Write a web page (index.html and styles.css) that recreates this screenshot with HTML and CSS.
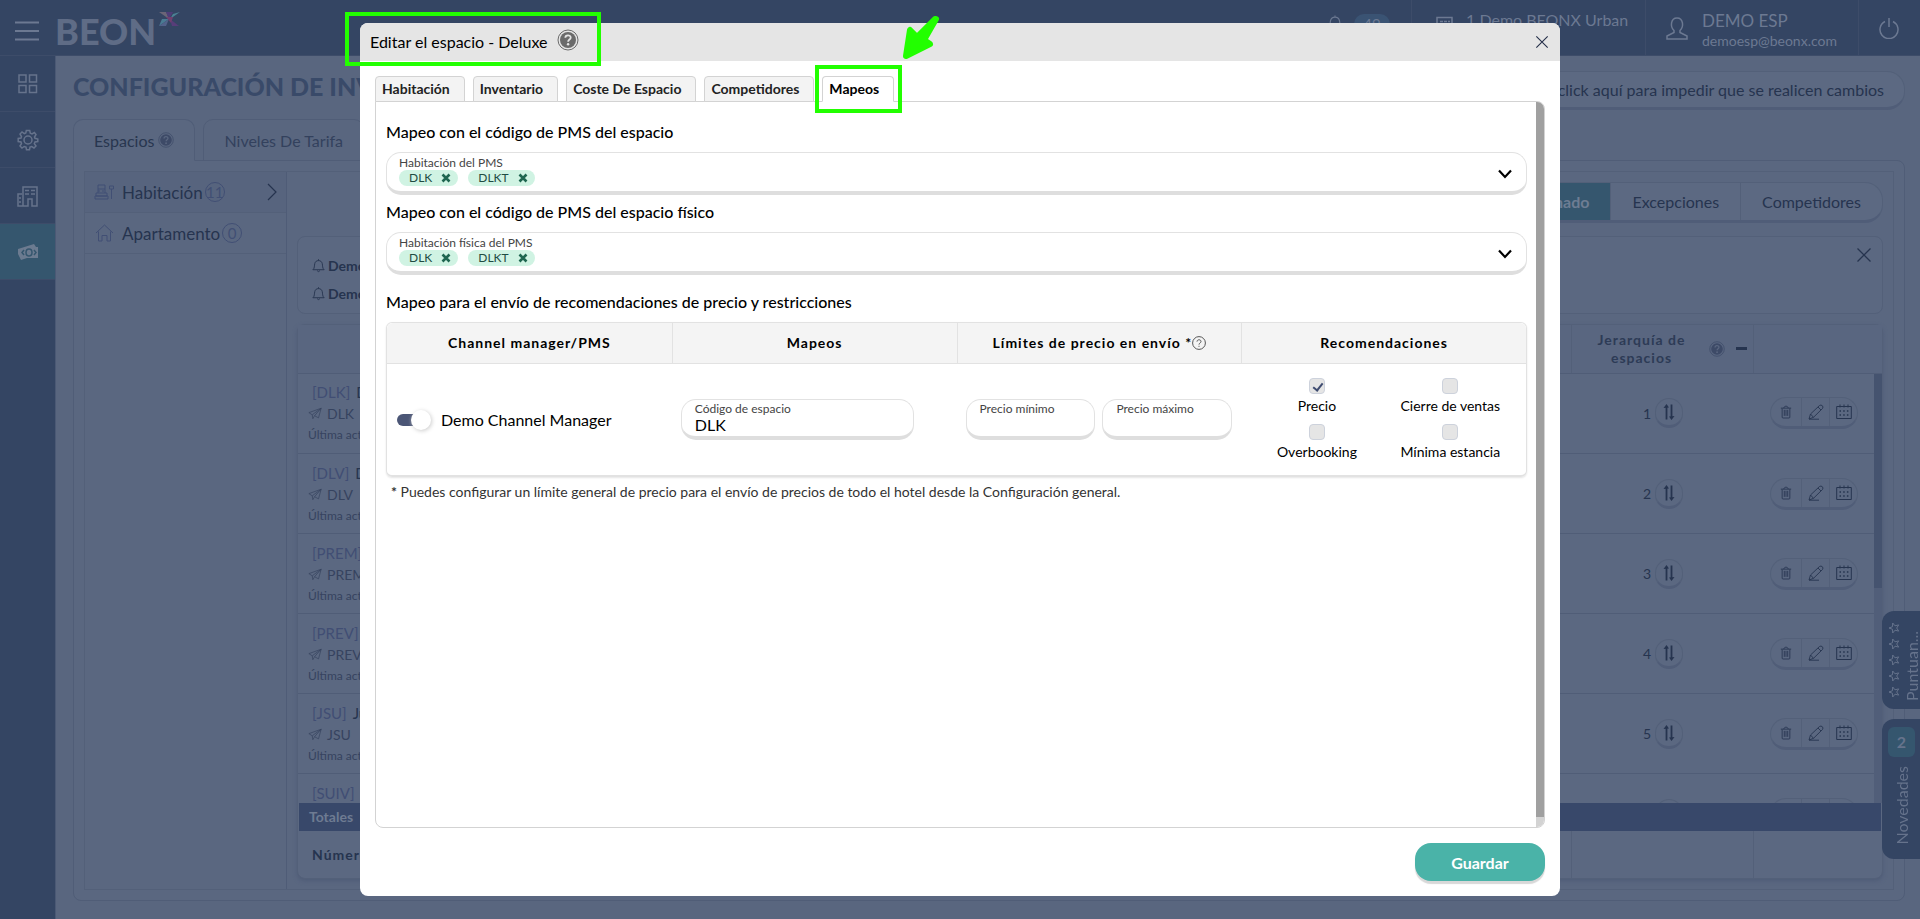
FILE: index.html
```html
<!DOCTYPE html>
<html lang="es">
<head>
<meta charset="utf-8">
<title>Configuración de inventario</title>
<link rel="stylesheet" href="styles.css">
</head>
<body>
<svg class="defs" aria-hidden="true">
  <symbol id="i-help" viewBox="0 0 22 22"><circle cx="11" cy="11" r="10" fill="none" stroke="currentColor" stroke-width="1"/><circle cx="11" cy="11" r="8" fill="currentColor"/><path d="M8.300 8.800C8.300 5.500 13.700 5.500 13.700 8.700C13.700 10.600 11.100 10.600 11.100 12.800" fill="none" stroke="var(--mark)" stroke-width="1.800"/><circle cx="11.100" cy="15.300" r="1.200" fill="var(--mark)"/></symbol>
  <symbol id="i-bell" viewBox="0 0 16 16"><path d="M2 12.500C4 11 3.500 8 4 6C4.600 3.600 6 2.800 8 2.800S11.400 3.600 12 6C12.500 8 12 11 14 12.500ZM8 2.800V1.300M6.500 13.500Q8 15.500 9.500 13.500" fill="none" stroke="currentColor"/></symbol>
  <symbol id="i-plane" viewBox="0 0 16 14"><path d="M1 6L15 1L12 12L7.500 9.500L5.500 13L4.800 8.500ZM4.800 8.500L15 1L7.500 9.500" fill="none" stroke="currentColor" stroke-width=".8"/></symbol>
  <symbol id="i-sort" viewBox="0 0 12 16"><path d="M3.500 15.500V2M8.500 .5V14" fill="none" stroke="currentColor" stroke-width="1.800"/><path d="M.5 4L3.500 0L6 3.500ZM6 12.500L8.500 16L11.500 12Z" fill="currentColor"/></symbol>
  <symbol id="i-trash" viewBox="0 0 14 16"><path d="M1 3.500H13M4.500 3.500C4.500 .5 9.500 .5 9.500 3.500M2.500 4V14Q2.500 15 3.500 15H10.500Q11.500 15 11.500 14V4M5 5.500V12.500M7 5.500V12.500M9 5.500V12.500" fill="none" stroke="currentColor"/></symbol>
  <symbol id="i-pen" viewBox="0 0 16 16"><path d="M1 15L2.500 10L11.500 1.500Q13 .5 14.300 1.700T14.500 4.500L5.500 13.300ZM10 3L13 6M2.500 10L5.500 13.300M1 15.200H11" fill="none" stroke="currentColor" stroke-width=".9"/></symbol>
  <symbol id="i-cal" viewBox="0 0 16 16"><path d="M.7 2.500H15.300V14.500H.7ZM4 .5V3.500M8 .5V3.500M12 .5V3.500" fill="none" stroke="currentColor"/><path d="M3.500 7H12.500M3.500 11H12.500" fill="none" stroke="currentColor" stroke-width="1.500" stroke-dasharray="1.500 2.200"/></symbol>
  <symbol id="i-x" viewBox="0 0 16 16"><path d="M1.500 1.500L14.500 14.500M14.500 1.500L1.500 14.500" fill="none" stroke="currentColor" stroke-width="1.300"/></symbol>
  <symbol id="i-cross" viewBox="0 0 10 10"><path d="M1.500 1.500L8.500 8.500M8.500 1.500L1.500 8.500" fill="none" stroke="currentColor" stroke-width="2.600"/></symbol>
  <symbol id="i-down" viewBox="0 0 14 10"><path d="M1 1.500L7 8L13 1.500" fill="none" stroke="currentColor" stroke-width="2.200"/></symbol>
  <symbol id="i-star" viewBox="0 0 12 12"><path d="M6 1L7.300 4.500L11 4.700L8.200 7L9.100 10.700L6 8.700L2.900 10.700L3.800 7L1 4.700L4.700 4.500Z" fill="none" stroke="currentColor"/></symbol>
</svg>

<div class="app">
  <header class="topbar">
    <button class="menu-btn" aria-label="Menú"><svg width="24" height="20" viewBox="0 0 24 20"><path d="M0 1.500H24M0 10H24M0 18.500H24" stroke="currentColor" stroke-width="2"/></svg></button>
    <div class="brand"><span>BEON</span><svg width="21" height="14" viewBox="0 0 21 14"><path d="M0 0H7L10 7Z" fill="#6b6577"/><path d="M7 0H14L10 7Z" fill="#4f3d79"/><path d="M14 2L21 0L11 7Z" fill="#4b8294"/><path d="M10 7L0 14L3 7Z" fill="#4a7b93"/><path d="M10 7L7 14H0Z" fill="#52628a"/><path d="M11 7L20 14H13Z" fill="#573d79"/><path d="M7 5L14 5L12 11Z" fill="#71406f"/></svg></div>
    <div class="top-cell bell"><svg width="18" height="18"><use href="#i-bell"/></svg><span class="count">49</span></div>
    <div class="top-cell hotel"><svg width="17" height="17" viewBox="0 0 17 17"><path d="M1 1.500H16V16H1ZM4 5.500H7M8 5.500H11M12 5.500H14" fill="none" stroke="currentColor" stroke-width="1.500"/></svg><span>1 Demo BEONX Urban</span></div>
    <div class="top-cell user"><svg width="22" height="23" viewBox="0 0 22 23"><path d="M1 22V19L8 15.500V13.500C4 10 4.500 1 11 1S18 10 14 13.500V15.500L21 19V22Z" fill="none" stroke="currentColor" stroke-width="1.500"/></svg><div><strong>DEMO ESP</strong><small>demoesp@beonx.com</small></div></div>
    <button class="top-cell power" aria-label="Salir"><svg width="20" height="22" viewBox="0 0 20 22"><path d="M6 4.500A9 9 0 1 0 14 4.500M10 1V10" fill="none" stroke="currentColor" stroke-width="1.500"/></svg></button>
  </header>

  <div class="body">
    <nav class="rail">
      <a href="#" aria-label="Panel"><svg width="20" height="20" viewBox="0 0 20 20"><path d="M1 1H8V8H1ZM11.500 1H18.500V8H11.500ZM1 11.500H8V18.500H1ZM11.500 11.500H18.500V18.500H11.500Z" fill="none" stroke="currentColor" stroke-width="1.500"/></svg></a>
      <a href="#" aria-label="Ajustes"><svg width="22" height="22" viewBox="0 0 22 22"><circle cx="11" cy="11" r="4" fill="none" stroke="currentColor" stroke-width="1.500"/><path d="M9.300 1.500H12.700L13.300 4.200L15 5L17.400 3.500L19 5.500L17.500 8L18 9.300L20.800 10V12.500L18 13L17.300 14.700L19 17L17 19L14.700 17.500L13 18L12.500 20.800H9.500L9 18L7.200 17.500L5 19L3 17L4.500 14.700L4 13L1.200 12.500V9.500L4 9L4.500 7.500L3 5L5 3L7.300 4.700L8.800 4Z" fill="none" stroke="currentColor" stroke-width="1.500"/></svg></a>
      <a href="#" aria-label="Hotel"><svg width="22" height="22" viewBox="0 0 22 22"><path d="M6 21H1V9H5M6 21V2H20V21H15V14H11V21ZM8 5.500H12M14 5.500H18M8 9H12M14 9H18M2 13H4M2 17H4" fill="none" stroke="currentColor" stroke-width="1.500"/></svg></a>
      <a href="#" class="active" aria-label="Tarifas"><svg width="22" height="18" viewBox="0 0 22 18"><path d="M1 6L17 1L19 4H21V15H10L4 17L1 11Z" fill="currentColor"/><ellipse cx="12" cy="9.500" rx="3" ry="3.500" fill="none" stroke="#35566e" stroke-width="1.500"/><path d="M7 7L5 9.500L7 12M17 7L19 9.500L17 12" fill="none" stroke="#35566e" stroke-width="1.500"/></svg></a>
    </nav>

    <main class="main">
      <div class="title-row">
        <h1>CONFIGURACIÓN DE INVENTARIO</h1>
        <button class="lock-btn">Haz click aquí para impedir que se realicen cambios</button>
      </div>
      <div class="page-tabs">
        <button class="page-tab on">Espacios <svg class="help" width="16" height="16"><use href="#i-help"/></svg></button>
        <button class="page-tab">Niveles De Tarifa</button>
      </div>
      <section class="page-panel">
        <div class="split">
          <aside class="types">
            <button class="type on"><svg width="20" height="16" viewBox="0 0 20 16"><path d="M4 1H11V5H4ZM4 5V9M11 5V9M2 9H13V12H2ZM1 12H14V15H1ZM17.500 5V15M15.500 2H19.500V5H15.500ZM4 7H6M8 7H10" fill="none" stroke="currentColor"/></svg><span>Habitación</span><i>11</i><svg class="go" width="10" height="18" viewBox="0 0 10 18"><path d="M1 1L9 9L1 17" fill="none" stroke="currentColor" stroke-width="1.200"/></svg></button>
            <button class="type"><svg width="20" height="18" viewBox="0 0 20 18"><path d="M2 9L10.500 1L19 9M4.500 7.500V17H8V11.500H13V17H16.500V7.500" fill="none" stroke="currentColor"/></svg><span>Apartamento</span><i>0</i></button>
          </aside>
          <div class="work">
            <div class="segments"><button class="seg on">Seleccionado</button><button class="seg">Excepciones</button><button class="seg">Competidores</button></div>
            <div class="notice">
              <ul><li><svg width="15" height="15"><use href="#i-bell"/></svg>Demo</li><li><svg width="15" height="15"><use href="#i-bell"/></svg>Demo</li></ul>
              <button class="plain" aria-label="Cerrar aviso"><svg width="16" height="16"><use href="#i-x"/></svg></button>
            </div>
            <div class="grid-card">
              <table class="grid">
                <thead><tr><th></th><th class="c-rank"><div class="rank-head"><span>Jerarquía de espacios</span><svg class="help" width="16" height="16"><use href="#i-help"/></svg><b class="minus"></b></div></th><th class="c-act"></th></tr></thead>
              </table>
              <div class="rows">
                <table class="grid"><tbody id="rooms"></tbody></table>
                <div class="track"><div class="thumb"></div></div>
              </div>
              <div class="totals">Totales</div>
              <table class="grid foot"><tbody><tr><td>Número</td><td class="c-rank"></td><td class="c-act"></td></tr></tbody></table>
            </div>
          </div>
        </div>
      </section>
    </main>
  </div>
</div>

<div class="side-tabs">
  <button class="side-tab rate"><span class="stars"><svg width="12" height="12"><use href="#i-star"/></svg><svg width="12" height="12"><use href="#i-star"/></svg><svg width="12" height="12"><use href="#i-star"/></svg><svg width="12" height="12"><use href="#i-star"/></svg><svg width="12" height="12"><use href="#i-star"/></svg></span><span class="vert">Puntuan...</span></button>
  <button class="side-tab news"><span class="num">2</span><span class="vert">Novedades</span></button>
</div>

<div class="overlay">
  <div class="modal" role="dialog" aria-labelledby="dlg-title">
    <div class="modal-head">
      <h2 id="dlg-title">Editar el espacio - Deluxe</h2>
      <svg class="help" width="22" height="22"><use href="#i-help"/></svg>
      <button class="plain close" aria-label="Cerrar"><svg width="14" height="14"><use href="#i-x"/></svg></button>
    </div>
    <div class="modal-body">
      <div class="tabs" role="tablist">
        <button role="tab" class="tab">Habitación</button>
        <button role="tab" class="tab">Inventario</button>
        <button role="tab" class="tab">Coste De Espacio</button>
        <button role="tab" class="tab">Competidores</button>
        <button role="tab" class="tab on" aria-selected="true">Mapeos</button>
      </div>
      <div class="panel">
        <div class="panel-content">
          <h3>Mapeo con el código de PMS del espacio</h3>
          <div class="multi">
            <div><label>Habitación del PMS</label><div class="chips"><span class="chip">DLK<button aria-label="Quitar DLK"><svg width="10" height="10"><use href="#i-cross"/></svg></button></span><span class="chip">DLKT<button aria-label="Quitar DLKT"><svg width="10" height="10"><use href="#i-cross"/></svg></button></span></div></div>
            <button class="plain" aria-label="Abrir lista"><svg width="14" height="10"><use href="#i-down"/></svg></button>
          </div>
          <h3>Mapeo con el código de PMS del espacio físico</h3>
          <div class="multi">
            <div><label>Habitación física del PMS</label><div class="chips"><span class="chip">DLK<button aria-label="Quitar DLK"><svg width="10" height="10"><use href="#i-cross"/></svg></button></span><span class="chip">DLKT<button aria-label="Quitar DLKT"><svg width="10" height="10"><use href="#i-cross"/></svg></button></span></div></div>
            <button class="plain" aria-label="Abrir lista"><svg width="14" height="10"><use href="#i-down"/></svg></button>
          </div>
          <h3 class="spaced">Mapeo para el envío de recomendaciones de precio y restricciones</h3>
          <table class="map">
            <thead><tr><th>Channel manager/PMS</th><th>Mapeos</th><th>Límites de precio en envío *<svg width="14" height="14" viewBox="0 0 14 14"><circle cx="7" cy="7" r="6.400" fill="none" stroke="#555"/><path d="M5 5.600C5 3.200 9 3.200 9 5.500C9 7 7 7 7 8.600M7 9.800V10.800" fill="none" stroke="#555"/></svg></th><th>Recomendaciones</th></tr></thead>
            <tbody><tr>
              <td><label class="switch-row"><input type="checkbox" class="switch" checked><span>Demo Channel Manager</span></label></td>
              <td><div class="field code"><label for="code">Código de espacio</label><input id="code" type="text" value="DLK"></div></td>
              <td><div class="pair"><div class="field"><label for="pmin">Precio mínimo</label><input id="pmin" type="text"></div><div class="field"><label for="pmax">Precio máximo</label><input id="pmax" type="text"></div></div></td>
              <td><div class="checks">
                <label><input type="checkbox" checked>Precio</label>
                <label><input type="checkbox">Cierre de ventas</label>
                <label><input type="checkbox">Overbooking</label>
                <label><input type="checkbox">Mínima estancia</label>
              </div></td>
            </tr></tbody>
          </table>
          <p class="note"><b>*</b> Puedes configurar un límite general de precio para el envío de precios de todo el hotel desde la Configuración general.</p>
        </div>
        <div class="panel-scroll"><div></div></div>
      </div>
      <div class="actions"><button class="save">Guardar</button></div>
    </div>
    <div class="mark mark-title"></div>
    <div class="mark mark-tab"></div>
    <svg class="arrow" width="40" height="48" viewBox="0 0 40 48"><path d="M33 4L15 22L8 15L4 41L28 29L22 25L34 4Z" fill="#2f0" stroke="#2f0" stroke-width="6" stroke-linejoin="round"/></svg>
  </div>
</div>
<script src="app.js"></script>
</body>
</html>
```
FILE: styles.css
```css
* { box-sizing: border-box; }
body { margin: 0; font-family: Lato, "Liberation Sans", sans-serif; font-size: 16px; color: #26344f; background: #59667f; overflow: hidden; }
button, input { font: inherit; color: inherit; }
button { cursor: pointer; border: 0; background: none; padding: 0; }
svg { display: block; flex: none; }
.defs { position: absolute; width: 0; height: 0; }
h1, h2, h3, p, ul { margin: 0; padding: 0; }
.help { --mark: #5a6780; color: #3d4a67; }

.app { height: 100vh; display: flex; flex-direction: column; }
.topbar { height: 56px; flex: none; display: flex; background: #344563; color: #6c7992; border-bottom: 1px solid #3d4c69; }
.menu-btn { width: 24px; margin-left: 15px; padding-top: 6px; }
.menu-btn svg { margin: auto; }
.brand { display: flex; flex: 1; margin-left: 16px; padding-top: 12px; gap: 3px; font-size: 36px; line-height: 38px; font-weight: 900; color: #5f6c86; }
.top-cell { display: flex; align-items: flex-start; flex: none; border-left: 1px solid #3d4c69; }
.bell { width: 85px; border: 0; padding: 14px 0 0 0; gap: 10px; color: #6c7992; }
.count { width: 36px; height: 20px; border-radius: 10px; background: #3a5373; font-size: 15px; text-align: center; line-height: 20px; }
.hotel { width: 234px; border-left-color: #3d4c69; padding: 10px 0 0 24px; gap: 13px; }
.hotel svg { margin-top: 6px; }
.hotel span { line-height: 20px; white-space: nowrap; font-size: 16px; }
.user { width: 213px; padding: 11px 0 0 20px; gap: 14px; }
.user svg { margin-top: 6px; }
.user strong, .user small { display: block; font-weight: 400; line-height: 20px; }
.user strong { font-size: 17px; }
.user small { font-size: 14px; }
.power { width: 62px; padding: 17px 0 0 20px; }

.body { flex: 1; display: flex; min-height: 0; }
.rail { width: 56px; flex: none; background: #344563; border-right: 1px solid #4b5975; color: #66738c; }
.rail a { height: 56px; display: flex; align-items: center; justify-content: center; color: inherit; border-bottom: 1px solid #3d4c69; }
.rail a.active { background: #35566e; color: #6c7b90; }
.main { flex: 1; min-width: 0; padding: 15px 15px 18px 17px; display: flex; flex-direction: column; }
.title-row { display: flex; justify-content: space-between; height: 48px; }
h1 { font-size: 25px; line-height: 30px; font-weight: 900; color: #394a69; }
.lock-btn { height: 39px; padding: 0 20px; border: 1px solid #536079; border-bottom: 3px solid #505d78; border-radius: 18px; background: #5c6982; font-size: 16px; }
.page-tabs { display: flex; gap: 8px; position: relative; margin-bottom: -1px; }
.page-tab { height: 42px; padding: 0 20px; display: flex; align-items: center; gap: 4px; border: 1px solid #505d77; border-radius: 10px 10px 0 0; font-size: 16px; color: #33415d; }
.page-tab.on { background: #5a6780; border-bottom-color: #5a6780; color: #28364f; }
.page-panel { flex: 1; min-height: 0; padding: 10px; background: #5a6780; border: 1px solid #505d77; border-radius: 0 8px 8px 8px; display: flex; }
.split { flex: 1; min-width: 0; display: flex; border: 1px solid #536079; }
.types { width: 202px; flex: none; border-right: 1px solid #4f5c77; }
.type { width: 100%; height: 41px; display: flex; align-items: center; padding: 0 9px; gap: 8px; border-bottom: 1px solid #536079; color: #414f74; background: #5a6780; }
.type.on { background: #57647e; }
.type span { font-size: 17px; color: #26344f; }
.type i { min-width: 20px; height: 20px; margin-left: -6px; border: 1px solid #414f74; border-radius: 10px; font-style: normal; font-size: 15px; line-height: 18px; text-align: center; }
.type .go { margin-left: auto; color: #26344f; }
.work { flex: 1; min-width: 0; padding: 10px; display: flex; flex-direction: column; }
.segments { align-self: flex-end; display: flex; height: 41px; border: 1px solid #536079; border-bottom: 3px solid #505d78; border-radius: 18px; overflow: hidden; background: #5c6982; margin-bottom: 13px; }
.seg { padding: 0 21px; border-left: 1px solid #536079; font-size: 16px; }
.seg.on { background: #35566e; color: #6e7d93; font-weight: 700; }
.notice { height: 78px; flex: none; padding: 14px 10px 0 13px; display: flex; justify-content: space-between; align-items: flex-start; border: 1px solid #536079; border-radius: 8px; background: #5b6881; margin-bottom: 10px; }
.notice li { display: flex; align-items: center; gap: 2px; height: 28px; font-size: 14px; font-weight: 700; }
.notice ul { list-style: none; }
.plain { display: flex; align-items: center; justify-content: center; }
.notice .plain { margin-top: -4px; }
.grid-card { flex: 1; min-height: 0; display: flex; flex-direction: column; border: 1px solid #536079; border-radius: 8px; background: #5b6881; box-shadow: 0 2px 4px #4f5c77; }
.grid { width: 100%; border-collapse: collapse; table-layout: fixed; }
.grid th { height: 48px; padding: 0; background: #596680; border-bottom: 1px solid #505d77; border-left: 1px solid #536079; }
.grid th:first-child { border-left: 0; }
.c-rank { width: 182px; }
.c-act { width: 129px; }
.rank-head { display: flex; align-items: center; gap: 11px; padding-left: 20px; font-size: 14px; line-height: 18px; letter-spacing: 1px; font-weight: 700; color: #2d3b56; }
.rank-head span { width: 100px; }
.minus { width: 11px; height: 3px; background: #26344f; }
.rank-head .help { margin-left: 6px; }
.rows { flex: 1; min-height: 0; overflow: hidden; display: flex; position: relative; }
.rows td { height: 80px; padding: 0 0 0 10px; border-bottom: 1px solid #505d77; }
.track { position: absolute; right: 0; top: 0; bottom: 0; width: 8px; background: #515e79; }
.thumb { height: 50%; background: #45536f; }
.room-name { padding-left: 4px; line-height: 22px; font-size: 15px; white-space: nowrap; }
.room-name span { color: #414e74; margin-right: 6px; }
.room-code { display: flex; gap: 5px; align-items: center; line-height: 21px; font-size: 14px; color: #36435f; }
.room-date { line-height: 21px; font-size: 12px; color: #36435f; }
.rank { display: flex; align-items: center; gap: 4px; padding-left: 62px; font-size: 14px; }
.round { width: 28px; height: 30px; border: 1px solid #536079; border-bottom: 3px solid #505d78; border-radius: 15px; display: flex; align-items: center; justify-content: center; }
.group { display: inline-flex; height: 32px; margin-left: 7px; border: 1px solid #536079; border-bottom: 3px solid #505d78; border-radius: 16px; vertical-align: middle; }
.group button { width: 28px; display: flex; align-items: center; justify-content: center; border-left: 1px solid #536079; }
.group button:first-child { border: 0; width: 30px; }
.totals { flex: none; height: 28px; margin: 0 1px; padding-left: 10px; background: #38486a; color: #6e7b92; line-height: 28px; font-size: 14px; font-weight: 700; }
.foot td { height: 47px; padding: 0 0 0 14px; font-size: 14px; font-weight: 700; letter-spacing: 1px; }
.foot td + td { border-left: 1px solid #536079; }

.side-tabs { position: fixed; right: 0; top: 611px; display: flex; flex-direction: column; gap: 10px; }
.side-tab { width: 38px; background: #344563; color: #66738c; border-radius: 12px 0 0 12px; display: flex; overflow: hidden; }
.rate { height: 98px; padding: 11px 0 0 6px; gap: 4px; }
.stars { display: flex; flex-direction: column; gap: 4px; }
.stars svg { transform: rotate(-90deg); }
.vert { writing-mode: vertical-rl; transform: rotate(180deg); font-size: 16px; line-height: 16px; }
.news { height: 140px; padding: 8px 5px 14px 6px; flex-direction: column; align-items: center; justify-content: space-between; }
.num { width: 27px; height: 30px; border-radius: 6px; background: #35566e; line-height: 30px; font-size: 16px; font-weight: 700; }

.overlay { position: fixed; inset: 0; padding: 23px 0; display: flex; justify-content: center; color: #000; }
.modal { position: relative; width: 63%; max-width: 1200px; background: #fff; border-radius: 8px; display: flex; flex-direction: column; }
.modal-head { height: 38px; flex: none; display: flex; align-items: center; gap: 9px; padding: 0 11px 0 10px; background: #e5e5e5; border-radius: 8px 8px 0 0; }
h2 { font-size: 16px; line-height: 20px; font-weight: 400; }
.modal-head .help { --mark: #e5e5e5; color: #6b6b6b; margin-top: -4px; }
.close { margin-left: auto; color: #26304a; }
.modal-body { flex: 1; min-height: 0; display: flex; flex-direction: column; padding: 15px; }
.tabs { display: flex; gap: 8px; position: relative; margin-bottom: -1px; }
.tab { height: 26px; padding: 0 14px 0 6px; border: 1px solid #d3d3d3; border-radius: 4px 4px 0 0; background: #f3f3f3; font-size: 14px; line-height: 20px; font-weight: 700; color: #222; }
.tab.on { background: #fff; border-bottom-color: #fff; color: #000; }
.panel { flex: 1; min-height: 0; display: flex; border: 1px solid #d3d3d3; border-radius: 0 8px 8px 8px; overflow: hidden; }
.panel-content { flex: 1; padding: 20px 9px 0 10px; }
.panel-scroll { width: 8px; background: #d3d3d3; padding-bottom: 10px; }
.panel-scroll div { height: 100%; background: #a0a0a0; }
h3 { font-size: 16px; line-height: 20px; font-weight: 500; margin-bottom: 10px; }
h3.spaced { margin-top: 17px; }
.multi, .field { border: 1px solid #e2e2e2; border-bottom: 4px solid #dedede; border-radius: 15px; background: #fff; }
.multi { height: 43px; display: flex; justify-content: space-between; padding: 3px 14px 0 12px; margin-bottom: 7px; }
.multi label, .field label { display: block; font-size: 12px; line-height: 14px; color: #444; }
.chips { display: flex; gap: 10px; }
.chip { height: 16px; display: flex; align-items: center; gap: 9px; padding: 0 7px 0 10px; border-radius: 8px; background: #d0f3e3; font-size: 12px; line-height: 16px; color: #1f4c42; }
.chip button { color: #1f6650; }
.map { width: 100%; table-layout: fixed; border-collapse: separate; border-spacing: 0; border: 1px solid #e2e2e2; border-bottom: 2px solid #e2e2e2; border-radius: 6px; box-shadow: 0 1px 2px #e5e5e5; }
.map th { height: 41px; padding: 0; background: #f4f4f4; border-bottom: 1px solid #e2e2e2; border-left: 1px solid #e2e2e2; font-size: 14px; line-height: 18px; font-weight: 700; letter-spacing: 1px; }
.map th:first-child { border-left: 0; border-radius: 6px 0 0; }
.map th:last-child { border-radius: 0 6px 0 0; }
.map th svg { display: inline-block; vertical-align: -2px; }
.map td { height: 111px; padding: 0 9px; vertical-align: middle; }
.switch-row { display: flex; align-items: center; gap: 10px; padding-left: 1px; font-size: 16px; line-height: 20px; }
.switch { appearance: none; width: 34px; height: 12px; margin: 0; border-radius: 6px; background: linear-gradient(90deg, #4b5676 60%, #fff 60%); position: relative; }
.switch::before { content: ""; position: absolute; right: 0; top: -4px; width: 20px; height: 20px; border-radius: 50%; background: #fff; box-shadow: 1px 1px 4px #ccc; }
.field { flex: 1; min-width: 0; height: 41px; padding: 2px 13px 0; }
.field.code { max-width: 233px; }
.field input { display: block; width: 100%; height: 17px; border: 0; padding: 0; outline: 0; background: none; font-size: 16px; }
.pair { display: flex; gap: 7px; }
.checks { display: grid; grid-template-columns: 1fr 1fr; row-gap: 8px; }
.checks label { display: flex; flex-direction: column; align-items: center; gap: 2px; font-size: 14px; line-height: 20px; }
.checks input { appearance: none; width: 16px; height: 16px; margin: 0; border: 1px solid #cdd2dc; border-radius: 4px; background: #e5e5e5; }
.checks input:checked::after { content: ""; display: block; width: 4px; height: 8px; margin: 2px 0 0 5px; border: solid #3f4c70; border-width: 0 2px 2px 0; transform: rotate(38deg); }
.note { padding: 6px 5px; font-size: 14px; line-height: 18px; color: #333; }
.actions { display: flex; justify-content: flex-end; padding-top: 15px; }
.save { width: 130px; height: 38px; border-radius: 16px; background: #4ab3a8; color: #fff; font-size: 16px; font-weight: 700; box-shadow: 0 3px 1px #d8d8d8; }
.mark { position: absolute; border: 4px solid #2f0; }
.mark-title { left: -15px; top: -11px; width: 256px; height: 54px; }
.mark-tab { left: 455px; top: 42px; width: 87px; height: 48px; }
.arrow { position: absolute; left: 542px; top: -8px; }
```
FILE: app.js
```js
const rooms = [
  ["DLK", "Deluxe"], ["DLV", "Deluxe Vista"], ["PREM", "Premium"],
  ["PREV", "Premium Vista"], ["JSU", "Junior Suite"], ["SUIV", "Suite Vista"]
];
const icon = (id, w, h) => `<svg width="${w}" height="${h}"><use href="#${id}"/></svg>`;
document.getElementById("rooms").innerHTML = rooms.map(([code, name], i) => `
<tr><td><div class="room-name"><span>[${code}]</span>${name}</div>
<div class="room-code">${icon("i-plane", 14, 13)}${code}</div>
<div class="room-date">Última act.</div></td>
<td class="c-rank"><div class="rank">${i + 1}<button class="round" aria-label="Mover">${icon("i-sort", 12, 16)}</button></div></td>
<td class="c-act"><div class="group"><button aria-label="Eliminar">${icon("i-trash", 12, 14)}</button><button aria-label="Editar">${icon("i-pen", 16, 16)}</button><button aria-label="Calendario">${icon("i-cal", 16, 16)}</button></div></td></tr>`).join("");
```
